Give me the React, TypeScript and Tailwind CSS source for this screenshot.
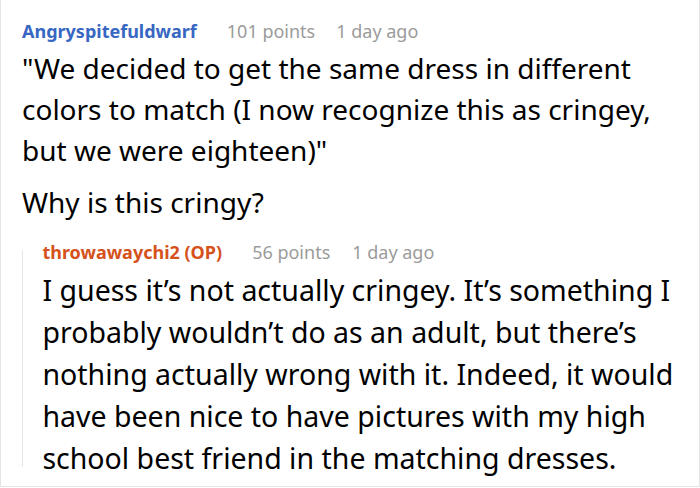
export default function App() {
  return (
    <div className="w-[700px] h-[487px] bg-white border-x border-b border-[#e3e3e3] overflow-hidden font-['Noto_Sans',sans-serif] text-black">
      <div className="pl-[21px] pr-3 pt-[15px]">
        <div className="flex items-baseline gap-[30px] text-[18px] leading-[32px]">
          <span className="font-bold text-[#3867c3]">Angryspitefuldwarf</span>
          <span className="flex gap-[21px] text-[#9b9b9b]">
            <span>101 points</span>
            <span>1 day ago</span>
          </span>
        </div>
        <p className="mt-[1px] text-[28px] leading-[41px]">
          "We decided to get the same dress in different colors to match (I now recognize this as cringey, but we were eighteen)"
        </p>
        <p className="mt-[11px] text-[28px] leading-[41px]">Why is this cringy?</p>
        <div className="mt-[13px] flex">
          <div className="mt-[14px] mb-[12px] w-[2px] bg-[#e6e6e6]" />
          <div className="pl-[20px]">
            <div className="flex items-baseline gap-[30px] text-[18px] leading-[32px]">
              <span className="font-bold text-[#d6521b]">throwawaychi2 (OP)</span>
              <span className="flex gap-[22px] text-[#9b9b9b]">
                <span>56 points</span>
                <span>1 day ago</span>
              </span>
            </div>
            <p className="mt-[1px] text-[28.5px] leading-[42px]">
              I guess it’s not actually cringey. It’s something I probably wouldn’t do as an adult, but there’s nothing actually wrong with it. Indeed, it would have been nice to have pictures with my high school best friend in the matching dresses.
            </p>
          </div>
        </div>
      </div>
    </div>
  )
}
